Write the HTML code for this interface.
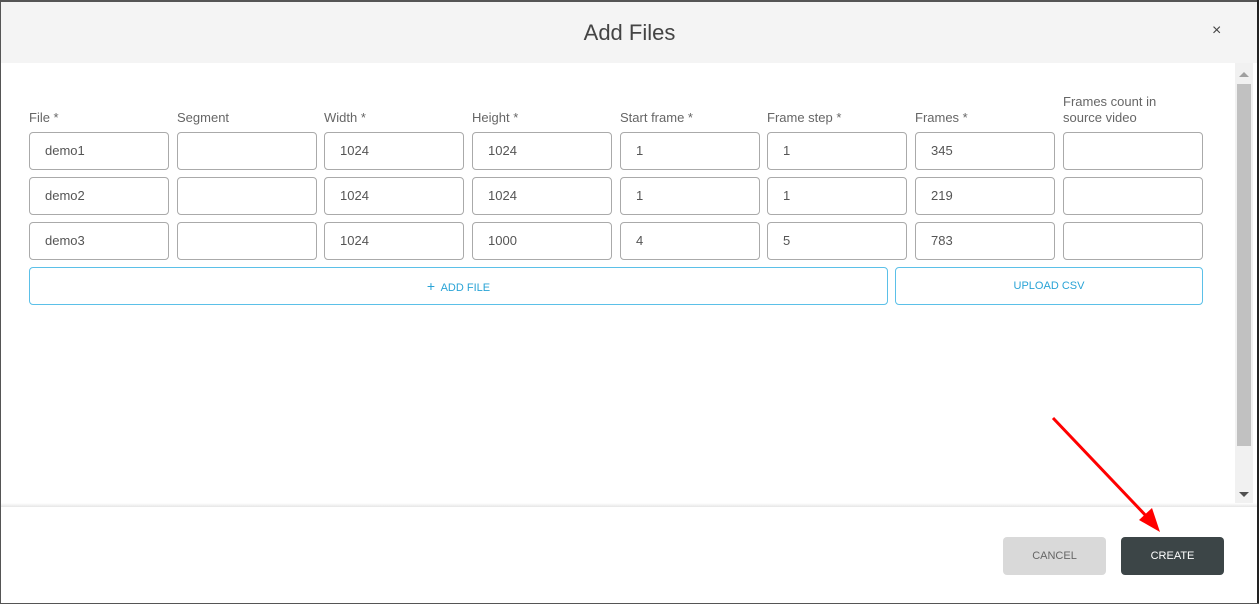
<!DOCTYPE html>
<html><head><meta charset="utf-8"><style>
*{box-sizing:border-box;margin:0;padding:0}
body{width:1259px;height:604px;position:relative;background:#fff;font-family:"Liberation Sans",sans-serif;overflow:hidden}
.a{position:absolute}
.lbl{position:absolute;font-size:13px;color:#666;line-height:16px}
.in{position:absolute;width:140px;height:38px;border:1px solid #aaa;border-radius:4px;font-size:13px;color:#555;padding-left:15px;line-height:36px}
.btn{position:absolute;border:1px solid #5bc0e8;border-radius:4px;color:#29a3d6;font-size:11px;text-align:center;line-height:36px;height:38px}
</style></head><body>
<div class="a" style="left:0;top:0;width:1259px;height:2px;background:#555"></div>
<div class="a" style="left:0;top:0;width:1px;height:604px;background:#555"></div>
<div class="a" style="right:0;top:0;width:2px;height:604px;background:#222"></div>
<div class="a" style="left:0;bottom:0;width:1259px;height:1px;background:#555"></div>
<div class="a" style="left:1px;top:2px;width:1256px;height:61px;background:#f4f4f4"></div>
<div class="a" style="left:0;top:20px;width:1259px;text-align:center;font-size:22px;color:#444">Add Files</div>
<div class="a" style="left:1212px;top:22px;font-size:16px;color:#444">×</div>
<div class="a" style="left:1235px;top:63px;width:18px;height:442px;background:#f1f1f1"></div>
<div class="a" style="left:1237px;top:84px;width:14px;height:362px;background:#c1c1c1"></div>
<div class="a" style="left:1239px;top:72px;width:0;height:0;border-left:5px solid transparent;border-right:5px solid transparent;border-bottom:5px solid #a0a0a0"></div>
<div class="a" style="left:1239px;top:492px;width:0;height:0;border-left:5px solid transparent;border-right:5px solid transparent;border-top:5px solid #505050"></div>
<div class="a" style="left:1px;top:503px;width:1256px;height:4px;background:linear-gradient(#fff,#e6e6e6)"></div>

<div class="lbl" style="left:29px;top:110px">File *</div>
<div class="lbl" style="left:177px;top:110px">Segment</div>
<div class="lbl" style="left:324px;top:110px">Width *</div>
<div class="lbl" style="left:472px;top:110px">Height *</div>
<div class="lbl" style="left:620px;top:110px">Start frame *</div>
<div class="lbl" style="left:767px;top:110px">Frame step *</div>
<div class="lbl" style="left:915px;top:110px">Frames *</div>
<div class="lbl" style="left:1063px;top:94px">Frames count in<br>source video</div>

<div class="in" style="left:29px;top:132px">demo1</div><div class="in" style="left:177px;top:132px"></div><div class="in" style="left:324px;top:132px">1024</div><div class="in" style="left:472px;top:132px">1024</div><div class="in" style="left:620px;top:132px">1</div><div class="in" style="left:767px;top:132px">1</div><div class="in" style="left:915px;top:132px">345</div><div class="in" style="left:1063px;top:132px"></div>
<div class="in" style="left:29px;top:177px">demo2</div><div class="in" style="left:177px;top:177px"></div><div class="in" style="left:324px;top:177px">1024</div><div class="in" style="left:472px;top:177px">1024</div><div class="in" style="left:620px;top:177px">1</div><div class="in" style="left:767px;top:177px">1</div><div class="in" style="left:915px;top:177px">219</div><div class="in" style="left:1063px;top:177px"></div>
<div class="in" style="left:29px;top:222px">demo3</div><div class="in" style="left:177px;top:222px"></div><div class="in" style="left:324px;top:222px">1024</div><div class="in" style="left:472px;top:222px">1000</div><div class="in" style="left:620px;top:222px">4</div><div class="in" style="left:767px;top:222px">5</div><div class="in" style="left:915px;top:222px">783</div><div class="in" style="left:1063px;top:222px"></div>

<div class="btn" style="left:29px;top:267px;width:859px"><span style="font-size:14px">+</span>&nbsp; ADD FILE</div>
<div class="btn" style="left:895px;top:267px;width:308px">UPLOAD CSV</div>

<div class="a" style="left:1003px;top:537px;width:103px;height:38px;background:#d9d9d9;border-radius:4px;color:#666;font-size:11px;text-align:center;line-height:38px">CANCEL</div>
<div class="a" style="left:1121px;top:537px;width:103px;height:38px;background:#3c4547;border-radius:4px;color:#fff;font-size:11px;text-align:center;line-height:38px">CREATE</div>

<svg class="a" style="left:0;top:0" width="1259" height="604"><line x1="1053" y1="418" x2="1150" y2="520" stroke="#f00" stroke-width="3"/><polygon points="1160,532 1139,520 1152,508" fill="#f00"/></svg>
</body></html>
